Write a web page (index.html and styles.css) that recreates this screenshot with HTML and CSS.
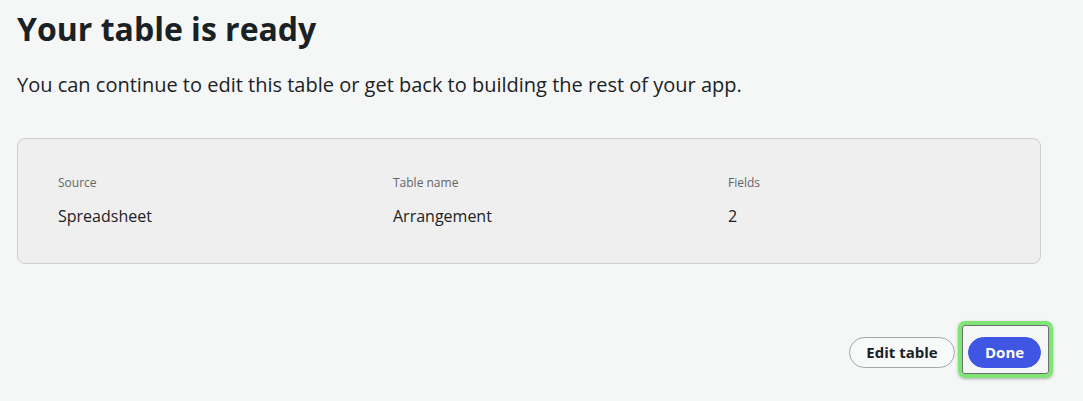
FILE: index.html
```html
<!DOCTYPE html>
<html lang="en">
<head>
<meta charset="utf-8">
<title>Your table is ready</title>
<link rel="stylesheet" href="styles.css">
</head>
<body>
<main class="page">
  <h1 class="title">Your table is ready</h1>
  <p class="lead">You can continue to edit this table or get back to building the rest of your app.</p>
  <section class="card">
    <div class="col">
      <div class="label">Source</div>
      <div class="value">Spreadsheet</div>
    </div>
    <div class="col">
      <div class="label">Table name</div>
      <div class="value">Arrangement</div>
    </div>
    <div class="col">
      <div class="label">Fields</div>
      <div class="value">2</div>
    </div>
  </section>
  <div class="actions">
    <button class="btn btn-secondary">Edit table</button>
    <div class="focus-wrap">
      <button class="btn btn-primary">Done</button>
      <span class="focus-ring"></span>
    </div>
  </div>
</main>
</body>
</html>
```
FILE: styles.css
```css
html, body {
  margin: 0;
  padding: 0;
  background: #f5f7f6;
}
body {
  font-family: "Open Sans", "Noto Sans", sans-serif;
  color: #1b2225;
  min-height: 401px;
}
.page {
  padding: 7px 42px 32px 17px;
}
.title {
  margin: 0;
  font-size: 32px;
  line-height: 44px;
  font-weight: 700;
  color: #192124;
}
.lead {
  margin: 20px 0 0;
  font-size: 20px;
  line-height: 28px;
  color: #1b2225;
}
.card {
  margin-top: 39px;
  background: #efefef;
  border: 1px solid #cdd0cf;
  border-radius: 8px;
  padding: 36px 40px 36px;
  display: grid;
  grid-template-columns: 335px 335px 1fr;
}
.label {
  font-size: 12px;
  line-height: 16px;
  color: #5f6668;
}
.value {
  margin-top: 14px;
  font-size: 16px;
  line-height: 22px;
  color: #1b2225;
}
.actions {
  margin-top: 73px;
  display: flex;
  justify-content: flex-end;
  align-items: center;
  gap: 13px;
}
.btn {
  font-family: "Open Sans", "Noto Sans", sans-serif;
  font-weight: 700;
  font-size: 15px;
  height: 31px;
  border-radius: 16px;
  padding: 0 16px;
  cursor: pointer;
  line-height: 29px;
}
.btn-secondary {
  background: #f8f9f9;
  border: 1px solid #a3a7a8;
  color: #1b2225;
  width: 106px;
}
.btn-primary {
  background: #3f56e4;
  border: 1px solid #3f56e4;
  color: #ffffff;
  width: 73px;
}
.focus-wrap {
  position: relative;
  display: block;
  height: 31px;
}
.focus-ring {
  position: absolute;
  left: -10px;
  top: -16px;
  width: 95px;
  height: 57px;
  box-sizing: border-box;
  border: 4px solid #80e477;
  border-radius: 7px;
  box-shadow: inset 0 0 0 1px #6a706b, 0 1px 3px rgba(0,0,0,0.3);
  pointer-events: none;
}
```
